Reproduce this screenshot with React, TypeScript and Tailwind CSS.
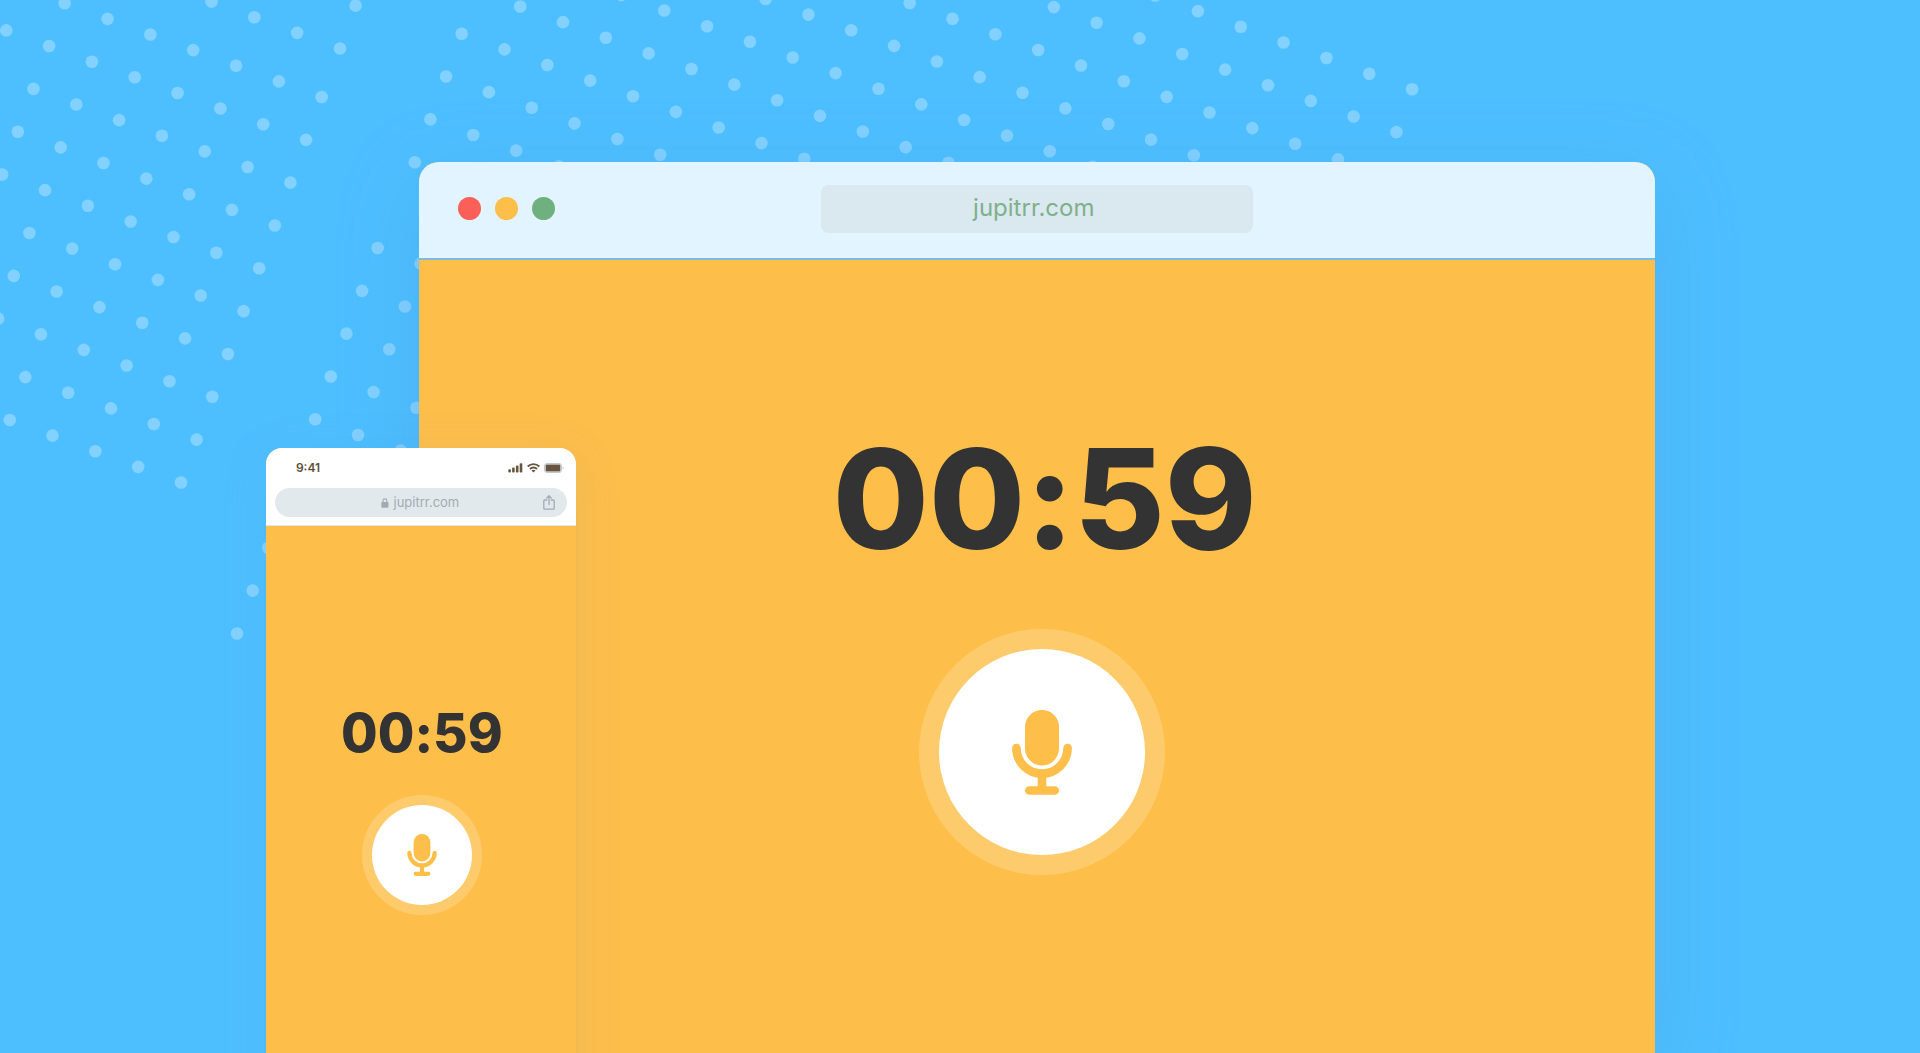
type Group = { x: number; y: number; cols: [number, number]; rows: [number, number] };

const STEP_X = 42.83;
const STEP_Y = 15.63;

const GROUPS: Group[] = [
  { x: 321.7, y: 97, cols: [-9, 0], rows: [0, 9] },
  { x: 340, y: 48.5, cols: [-3, 0], rows: [-1, 0] },
  { x: 461.7, y: 33.7, cols: [0, 20], rows: [-6, 3] },
  { x: 377.7, y: 248, cols: [0, 2], rows: [0, 9] },
];

function range([from, to]: [number, number]) {
  return Array.from({ length: to - from + 1 }, (_, n) => from + n);
}

function DotPattern() {
  return (
    <svg className="absolute left-0 top-0" width="1440" height="660" aria-hidden="true">
      <g fill="#82d1ff">
        {GROUPS.flatMap((g, k) =>
          range(g.rows).flatMap((j) =>
            range(g.cols).map((i) => (
              <circle
                key={`${k}-${i}-${j}`}
                cx={g.x + i * STEP_X - j * STEP_Y}
                cy={g.y + i * STEP_Y + j * STEP_X}
                r="6.3"
              />
            )),
          ),
        )}
      </g>
    </svg>
  );
}

function Mic({ className }: { className: string }) {
  return (
    <svg className={className} viewBox="0 0 60 85" fill="none" aria-hidden="true">
      <rect x="13" y="0" width="34" height="55.5" rx="17" fill="#fdbe4a" />
      <path d="M4.4 38a25.6 25.6 0 0 0 51.2 0" stroke="#fdbe4a" strokeWidth="8.6" strokeLinecap="round" />
      <path d="M30 64V80" stroke="#fdbe4a" strokeWidth="8.6" />
      <rect x="13" y="76.2" width="34" height="8.6" rx="4.3" fill="#fdbe4a" />
    </svg>
  );
}

function Signal() {
  return (
    <svg className="h-[10px] w-[15px]" viewBox="0 0 15 10" fill="#665640" aria-hidden="true">
      <rect x="0.3" y="6.3" width="2.6" height="3.2" rx="0.8" />
      <rect x="4.1" y="4.6" width="2.6" height="4.9" rx="0.8" />
      <rect x="7.9" y="2.6" width="2.6" height="6.9" rx="0.8" />
      <rect x="11.7" y="0.2" width="2.6" height="9.3" rx="0.8" />
    </svg>
  );
}

function Wifi() {
  return (
    <svg className="h-[10px] w-[13px]" viewBox="0 0 13 10" fill="none" stroke="#665640" strokeWidth="1.9" aria-hidden="true">
      <path d="M0.7 3.5a8.2 8.2 0 0 1 11.6 0" />
      <path d="M3 6a4.9 4.9 0 0 1 7 0" />
      <path d="M6.5 9.6 4.5 7.6a2.9 2.9 0 0 1 4 0z" fill="#665640" stroke="none" />
    </svg>
  );
}

function Battery() {
  return (
    <svg className="h-[10px] w-[20px]" viewBox="0 0 20 10" aria-hidden="true">
      <rect x="0.5" y="0.5" width="17" height="9" rx="2.4" fill="none" stroke="#bfc9d2" />
      <rect x="1.6" y="1.6" width="14.8" height="6.8" rx="1" fill="#665640" />
      <path d="M18.7 3.6v2.8a1.5 1.5 0 0 0 0-2.8z" fill="#bfc9d2" />
    </svg>
  );
}

function Lock() {
  return (
    <svg className="h-[10px] w-[8px]" viewBox="0 0 8 10" aria-hidden="true">
      <rect x="0.3" y="4" width="7.2" height="5.8" rx="1" fill="#a3abb2" />
      <path d="M2 4.3V2.8a1.9 1.9 0 0 1 3.8 0v1.5" fill="none" stroke="#a3abb2" strokeWidth="1.1" />
    </svg>
  );
}

function Share() {
  return (
    <svg className="h-[15px] w-[12px]" viewBox="0 0 12 15" fill="none" stroke="#a3abb2" strokeWidth="1.3" strokeLinecap="round" strokeLinejoin="round" aria-hidden="true">
      <path d="M3.8 5H1.8a1 1 0 0 0-1 1v7.2a1 1 0 0 0 1 1h8.4a1 1 0 0 0 1-1V6a1 1 0 0 0-1-1h-2" />
      <path d="M6 9.5V1M3.8 3 6 0.8 8.2 3" />
    </svg>
  );
}

export default function App() {
  return (
    <main className="relative flex min-h-screen flex-col overflow-hidden bg-[#4dbfff] pt-[162px] font-['Inter',sans-serif]">
      <DotPattern />

      <section
        aria-label="Desktop browser"
        className="relative ml-[21.8%] mr-[13.8%] flex grow flex-col rounded-t-[20px] bg-[#fdbe4a] shadow-[0_20px_80px_rgba(80,150,220,0.3)]"
      >
        <header className="grid h-[98px] grid-cols-[1fr_432px_1fr] items-center rounded-t-[20px] border-b-2 border-[#7fbbe0] bg-[#e1f4ff] px-[39px] pb-0.5">
          <div className="flex gap-[14px] pb-0.5">
            <button aria-label="Close" className="size-[23px] rounded-full bg-[#fa6058]" />
            <button aria-label="Minimize" className="size-[23px] rounded-full bg-[#fdbe4a]" />
            <button aria-label="Zoom" className="size-[23px] rounded-full bg-[#6fb07f]" />
          </div>
          <input
            aria-label="Address"
            defaultValue="jupitrr.com"
            className="h-12 w-full rounded-lg bg-[#dae8ef] pb-1 pr-1.5 text-center text-2xl text-[#7fb08b] outline-none [font-optical-sizing:none]"
          />
        </header>
        <div className="flex flex-col items-center pl-[10px] pt-[164px]">
          <time className="pl-1.5 text-[139px] font-extrabold leading-[150px] text-[#333333] [font-feature-settings:'calt'_0]">00:59</time>
          <button aria-label="Record" className="mt-[55px] rounded-full bg-[#fdcb6c] p-5">
            <span className="flex size-[206px] items-center justify-center rounded-full bg-white">
              <Mic className="h-[85px] w-[60px]" />
            </span>
          </button>
        </div>
      </section>

      <section
        aria-label="Phone browser"
        className="absolute -bottom-16 left-[13.85%] top-[448px] w-[310px] rounded-t-[16px] bg-[#fdbe4a] shadow-[0_8px_48px_rgba(110,150,190,0.12)]"
      >
        <header className="rounded-t-[16px] border-b border-[#dae7ef] bg-white px-[9px] pb-2">
          <div className="flex h-10 items-center justify-between pl-[21px] pr-[3px]">
            <span className="text-xs font-semibold text-[#5d5138]">9:41</span>
            <span className="flex items-center gap-1">
              <Signal />
              <Wifi />
              <Battery />
            </span>
          </div>
          <div className="grid h-[29px] grid-cols-[1fr_auto_1fr] items-center rounded-full bg-[#e1e9ec] px-3 text-[#a3abb2]">
            <span className="col-start-2 flex items-center gap-[5px] pr-0.5">
              <Lock />
              <a href="#" className="text-[13px]">jupitrr.com</a>
            </span>
            <button aria-label="Share" className="justify-self-end">
              <Share />
            </button>
          </div>
        </header>
        <div className="flex flex-col items-center pl-0.5 pt-[178px]">
          <time className="text-[53px] font-extrabold leading-[58px] text-[#333333] [font-feature-settings:'calt'_0]">00:59</time>
          <button aria-label="Record" className="mt-[33px] rounded-full bg-[#fdcb6c] p-[10px]">
            <span className="flex size-[100px] items-center justify-center rounded-full bg-white">
              <Mic className="h-[42px] w-[30px]" />
            </span>
          </button>
        </div>
      </section>
    </main>
  );
}
